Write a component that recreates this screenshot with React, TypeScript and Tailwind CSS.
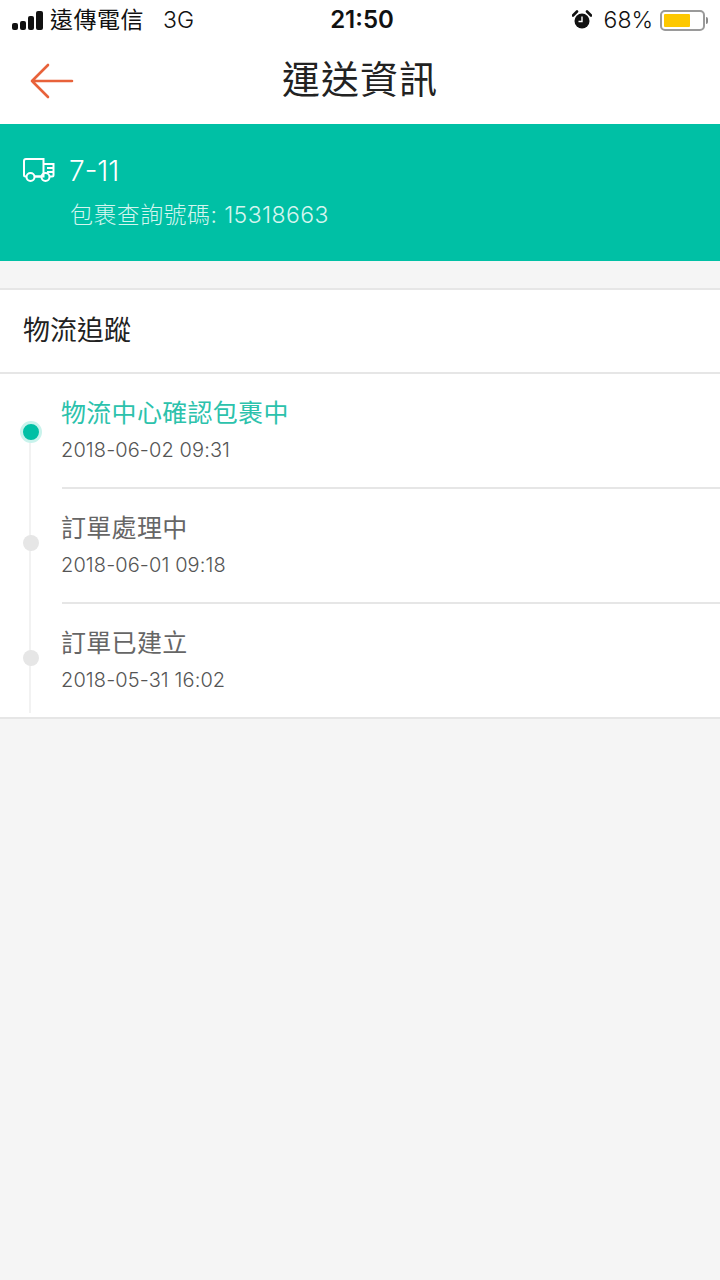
const FONT = "font-['Inter','Noto_Sans_CJK_TC',sans-serif]";

const events = [
  { title: "物流中心確認包裹中", time: "2018-06-02 09:31", active: true },
  { title: "訂單處理中", time: "2018-06-01 09:18", active: false },
  { title: "訂單已建立", time: "2018-05-31 16:02", active: false },
];

function Signal() {
  return (
    <div className="flex items-end gap-[2px]">
      <div className="h-[7px] w-[6px] rounded-[2px] bg-[#111]" />
      <div className="h-[9px] w-[6px] rounded-[2px] bg-[#111]" />
      <div className="h-[14px] w-[6px] rounded-[2px] bg-[#111]" />
      <div className="h-[19px] w-[7px] rounded-[2px] bg-[#111]" />
    </div>
  );
}

function Alarm() {
  return (
    <svg width="20" height="20" viewBox="0 0 20 20" className="block">
      <circle cx="10" cy="11" r="7.5" fill="#111" />
      <path d="M1 5.5 L5 1.5 M15 1.5 L19 5.5" stroke="#111" strokeWidth="2.6" strokeLinecap="round" />
      <path d="M10 6.5 V11.5 H6.5" stroke="#fff" strokeWidth="1.4" fill="none" />
    </svg>
  );
}

function Truck() {
  return (
    <svg width="32" height="26" viewBox="0 0 32 26" fill="none" stroke="#fff" strokeWidth="2" className="block">
      <path d="M3 18.5 H2.5 A1.5 1.5 0 0 1 1 17 V3 A2 2 0 0 1 3 1 H20.5 V18.5 H12" />
      <path d="M20.5 6 H30.5 V17 A1.5 1.5 0 0 1 29 18.5 H27" />
      <path d="M24 10 H30.5 M24 14 H30.5" />
      <path d="M12 18.5 H18" />
      <circle cx="7.5" cy="19" r="4" />
      <circle cx="22.5" cy="19" r="4" />
    </svg>
  );
}

export default function App() {
  return (
    <div className={`flex min-h-[1280px] w-[720px] flex-col bg-[#f5f5f5] ${FONT}`}>
      <div className="flex h-[124px] flex-col bg-white">
        <div className="flex h-[40px] items-center justify-between pl-[12px] pr-[12px]">
          <div className="flex w-[264px] items-center text-[#111]">
            <Signal />
            <span className="ml-[7px] text-[23px] leading-none tracking-[0.5px]">遠傳電信</span>
            <span className="ml-[19px] text-[23px] font-light leading-none">3G</span>
          </div>
          <span className="text-[24px] font-semibold leading-none text-[#111]">21:50</span>
          <div className="flex w-[260px] items-center justify-end text-[#111]">
            <Alarm />
            <span className="ml-[12px] text-[23px] font-light leading-none">68%</span>
            <div className="ml-[7px] flex items-center">
              <div className="h-[21px] w-[45px] rounded-[5px] border-2 border-[#9a9a9a] p-[2px]">
                <div className="h-full w-[26px] rounded-[1px] bg-[#fdc800]" />
              </div>
              <div className="ml-[1px] h-[7px] w-[2px] rounded-r-sm bg-[#8a8a8a]" />
            </div>
          </div>
        </div>
        <div className="relative flex flex-1 items-center justify-center pb-[6px]">
          <svg width="46" height="36" viewBox="0 0 46 36" fill="none" stroke="#e8623a" strokeWidth="2.6" strokeLinecap="round" strokeLinejoin="round" className="absolute left-[29px] top-[23px]">
            <path d="M3 18 H43 M19 2 L3 18 L19 34" />
          </svg>
          <span className="text-[38px] leading-none tracking-[1px] text-[#222]">運送資訊</span>
        </div>
      </div>

      <div className="flex h-[137px] flex-col bg-[#00c0a5] pl-[23px] pt-[29px] text-white">
        <div className="flex h-[36px] items-center">
          <Truck />
          <span className="ml-[14px] text-[28px] font-light leading-none">7-11</span>
        </div>
        <div className="ml-[47px] mt-[15px] text-[23px] font-light leading-none tracking-[0.4px] text-[#d4f5ef]">包裹查詢號碼: 15318663</div>
      </div>

      <div className="mt-[27px] border-y-2 border-[#e6e6e6] bg-white">
        <div className="flex h-[84px] items-center border-b-2 border-[#e6e6e6] pl-[23px] text-[27px] text-[#222]">物流追蹤</div>
        {events.map((e, i) => (
          <div key={e.time} className={`relative pl-[62px] ${i === 2 ? "h-[113px]" : "h-[115px]"}`}>
            <div className={`absolute left-[29px] w-[2px] bg-[#f2f2f2] ${i === 0 ? "top-[57px] bottom-0" : i === 2 ? "top-0 bottom-[4px]" : "top-0 bottom-0"}`} />
            {e.active ? (
              <div className="absolute left-[20px] top-[47px] h-[22px] w-[22px] rounded-full border-[3px] border-[#c9f3ec] bg-[#00c0a5]" />
            ) : (
              <div className="absolute left-[23px] top-[46px] h-[16px] w-[16px] rounded-full bg-[#e6e6e6]" />
            )}
            <div className={`flex h-full flex-col pt-[24px] ${i < 2 ? "border-b-2 border-[#e6e6e6]" : ""}`}>
              <div className={`-ml-[1px] text-[25px] leading-[30px] tracking-[0.3px] ${e.active ? "text-[#2cc2ac]" : "text-[#666]"}`}>{e.title}</div>
              <div className="-ml-[1px] mt-[9px] text-[20px] font-light leading-[26px] tracking-[0.1px] text-[#555]">{e.time}</div>
            </div>
          </div>
        ))}
      </div>
    </div>
  );
}
